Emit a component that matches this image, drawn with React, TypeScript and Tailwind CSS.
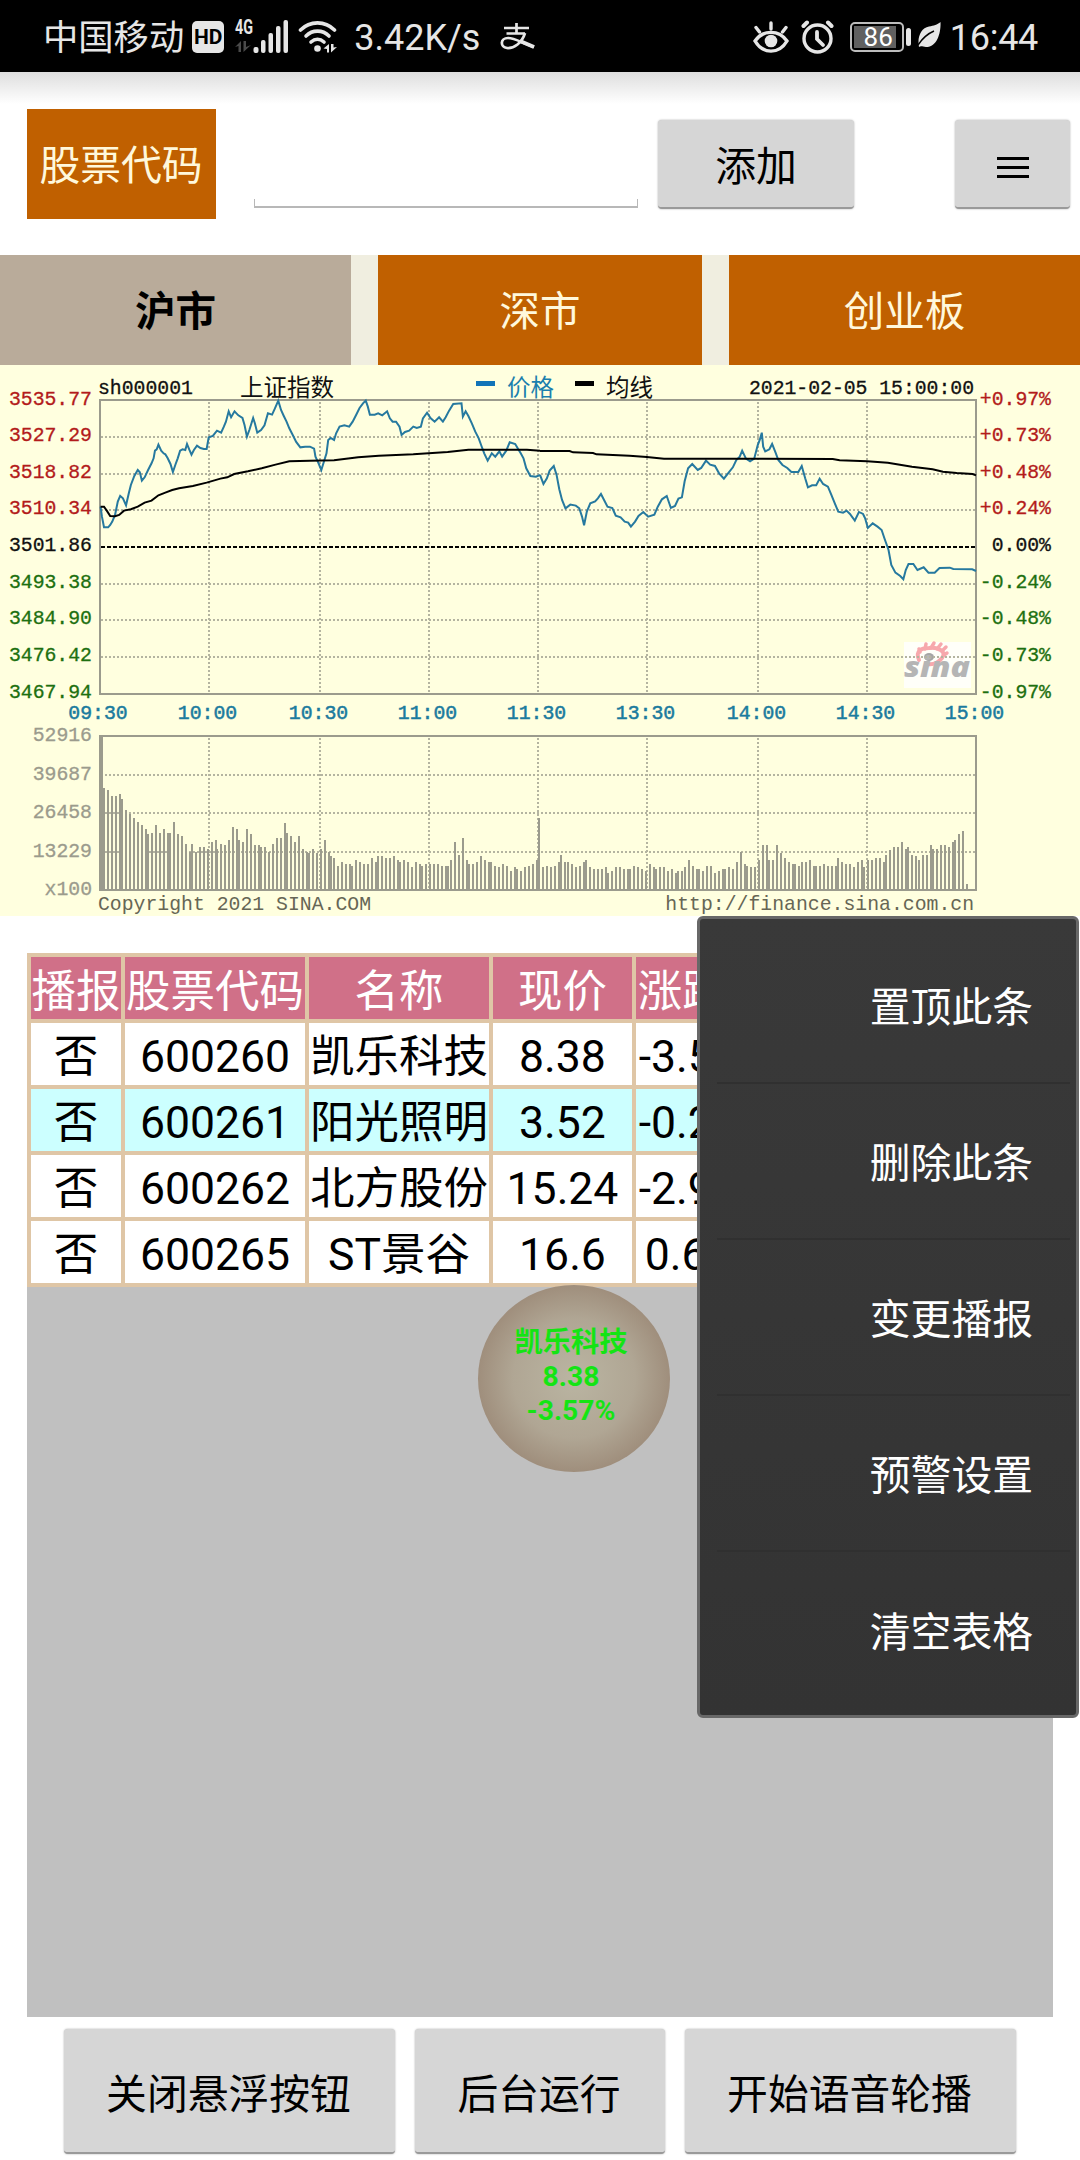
import { useState } from "react"

const TABS = ["沪市", "深市", "创业板"]

const STOCKS = [
  { code: "600260", name: "凯乐科技", price: "8.38", change: "-3.57%" },
  { code: "600261", name: "阳光照明", price: "3.52", change: "-0.28%" },
  { code: "600262", name: "北方股份", price: "15.24", change: "-2.93%" },
  { code: "600265", name: "ST景谷", price: "16.6", change: "0.61%" },
]

const MENU_ITEMS = ["置顶此条", "删除此条", "变更播报", "预警设置", "清空表格"]

const PRICE_LABELS = [
  { price: "3535.77", pct: "+0.97%", color: "#b31b1b" },
  { price: "3527.29", pct: "+0.73%", color: "#b31b1b" },
  { price: "3518.82", pct: "+0.48%", color: "#b31b1b" },
  { price: "3510.34", pct: "+0.24%", color: "#b31b1b" },
  { price: "3501.86", pct: "0.00%", color: "#111111" },
  { price: "3493.38", pct: "-0.24%", color: "#1d7010" },
  { price: "3484.90", pct: "-0.48%", color: "#1d7010" },
  { price: "3476.42", pct: "-0.73%", color: "#1d7010" },
  { price: "3467.94", pct: "-0.97%", color: "#1d7010" },
]

const TIMES = ["09:30", "10:00", "10:30", "11:00", "11:30", "13:30", "14:00", "14:30", "15:00"]
const TIME_X = [98, 207.5, 318.5, 427.5, 536.5, 645.5, 756.5, 865.5, 974.5]
const GRID_X = [209, 320, 429, 538, 647, 758, 867]
const VOLUME_LABELS = ["52916", "39687", "26458", "13229", "x100"]

// intraday price, each session drawn in its own coordinate space
const MORNING_PRICE =
  "292,800 296,830 302,862 314,862 320,855 326,845 334,825 342,785 349,768 357,775 366,796 374,760 380,735 390,708 400,690 406,697 412,722 420,712 430,690 440,670 446,655 450,632 455,628 460,614 468,632 475,640 480,643 487,655 495,672 502,696 510,672 516,655 523,632 530,628 538,630 543,612 550,630 556,644 563,630 572,617 582,624 592,627 600,627 606,592 618,588 630,572 642,578 650,560 656,545 664,514 671,532 681,514 692,526 704,534 710,555 717,590 724,570 735,534 740,550 747,578 758,570 768,556 778,520 790,524 798,506 808,482 816,510 824,528 832,545 840,565 850,585 860,606 872,622 886,620 900,620 912,626 916,650 924,668 933,690 942,660 948,640 953,600 960,594 970,600 976,580 986,560 1000,556 1014,560 1024,545 1034,525 1044,504 1054,490 1062,482 1068,500 1074,524 1088,524 1098,520 1110,526 1124,514 1132,535 1140,545 1150,545 1160,560 1166,585 1176,576 1188,572 1200,560 1210,564 1222,560 1228,535 1240,518 1250,534 1262,545 1275,532 1286,545 1294,532 1304,512 1316,492 1340,490 1344,530 1352,514 1360,528 1370,550 1380,575 1390,595 1398,618 1406,640 1416,662 1428,640 1438,650 1450,634 1458,650 1470,632 1480,607 1496,612 1504,626 1512,640 1520,655 1528,685 1540,708 1556,710 1568,705"
const AFTERNOON_PRICE =
  "0,705 10,732 20,715 28,692 40,678 48,704 56,748 64,780 74,805 88,794 104,797 114,805 122,830 128,856 136,815 146,790 160,784 168,775 177,762 186,780 196,800 210,804 220,827 234,832 246,845 256,848 264,860 276,845 286,828 300,816 314,830 332,824 342,800 354,778 368,768 380,804 392,798 402,776 412,772 420,724 430,685 442,672 458,690 468,684 482,662 494,674 508,678 520,700 534,716 546,700 560,682 570,660 580,650 587,632 598,656 610,664 622,656 632,616 638,600 644,578 648,620 654,634 666,628 674,612 684,638 692,660 704,675 718,684 730,696 750,696 760,678 770,715 778,742 790,736 802,736 812,716 822,732 836,740 846,765 856,790 866,815 880,818 890,812 900,822 914,842 926,816 938,822 944,835 952,864 966,850 980,860 992,870 1000,895 1012,930 1020,975 1032,998 1046,1008 1055,1018 1062,990 1070,972 1084,972 1096,990 1114,982 1128,998 1146,998 1160,984 1190,983 1200,987 1255,988 1266,993"
const MORNING_AVG =
  "292,800 302,800 310,812 320,828 334,829 346,825 360,812 380,808 400,800 420,788 440,782 460,766 480,758 500,750 520,745 560,738 600,728 640,716 660,712 680,702 720,694 760,685 800,674 840,664 900,662 970,661 1040,652 1100,647 1200,643 1300,636 1360,629 1530,629 1568,632"
const AFTERNOON_AVG =
  "0,633 86,633 96,637 154,639 164,643 260,647 310,651 360,656 850,657 870,661 950,664 1010,668 1080,680 1140,688 1170,695 1210,699 1256,702 1266,706"

const MORNING_VOLUME = [
  527, 685, 690, 708, 708, 702, 716, 750, 762, 774, 786, 795, 808, 822, 820, 795, 820, 808, 820, 820,
  786, 822, 828, 852, 875, 852, 876, 862, 862, 868, 847, 840, 868, 852, 855, 840, 801, 808, 840, 846,
  808, 822, 855, 856, 862, 862, 876, 852, 835, 835, 789, 820, 829, 846, 828, 868, 875, 880, 868, 880,
  868, 840, 876, 888, 895, 918, 906, 912, 912, 918, 900, 906, 912, 912, 894, 906, 888, 888, 895, 895,
  888, 900, 906, 900, 906, 922, 906, 912, 918, 912, 912, 912, 912, 918, 918, 918, 900, 847, 885, 835,
  900, 912, 912, 906, 888, 900, 906, 906, 918, 922, 912, 918, 934, 922, 928, 934, 922, 918, 912, 900,
]
const AFTERNOON_VOLUME = [
  775, 922, 918, 922, 918, 906, 886, 906, 906, 912, 922, 918, 906, 900, 922, 928, 928, 928, 922, 940,
  934, 922, 922, 928, 928, 928, 918, 922, 928, 934, 912, 922, 928, 922, 922, 934, 928, 940, 934, 934,
  922, 900, 918, 928, 928, 934, 918, 918, 940, 934, 928, 928, 922, 928, 906, 875, 912, 918, 922, 922,
  900, 855, 855, 900, 900, 855, 880, 894, 906, 912, 912, 918, 906, 906, 900, 918, 918, 918, 912, 918,
  918, 918, 894, 906, 912, 912, 922, 906, 900, 922, 900, 900, 894, 894, 906, 885, 870, 862, 862, 847,
  868, 862, 885, 888, 900, 885, 885, 855, 868, 868, 855, 855, 862, 847, 840, 822, 814, 972,
]

// bars sit on a two pixel raster, so some neighbours touch
const barX = (minute: number) => Math.round(99.5 + Math.round(minute * 1.842 + 0.4) * 1.983)

function StatusBar() {
  return (
    <div className="flex h-[72px] items-center bg-black pl-[43px] pr-[42px] pt-[2px] text-[#e6e6e6]">
      <span className="pt-[3px] text-[35.3px] leading-none">中国移动</span>
      <span className="ml-[8px] flex h-[32px] w-[32px] items-center justify-center rounded-[5px] bg-[#e6e6e6] text-[21px] font-bold leading-none text-black">
        HD
      </span>
      <svg className="ml-[11px] overflow-visible" width="54" height="36" viewBox="0 0 54 36" fill="#e6e6e6">
        <text x="0" y="15" fontSize="20" fontWeight="700" textLength="18" lengthAdjust="spacingAndGlyphs" fontFamily="Roboto">4G</text>
        <path d="M0 28 L6 22 V33 H3.500 V27 Z M8.500 22 H11 V28 L16 26 L8.500 33 Z" fill="#4a4a4a" />
        <rect x="18.500" y="28" width="5" height="6" rx="2" />
        <rect x="26" y="21" width="4.500" height="13" rx="2" />
        <rect x="33.500" y="14" width="4.500" height="20" rx="2" />
        <rect x="41" y="7" width="4.500" height="27" rx="2" />
        <rect x="48.500" y="1" width="4.500" height="33" rx="2" />
      </svg>
      <svg className="ml-[9px]" width="40" height="34" viewBox="0 0 40 34" fill="none" stroke="#e6e6e6" strokeWidth="3.600" strokeLinecap="round">
        <path d="M2.500 10 C12 0.500 27 0.500 36.500 10" />
        <path d="M8 16 C14.500 9.500 24.500 9.500 31 16" />
        <path d="M13 22 C17 18.500 22 18.500 26 22" />
        <circle cx="19.500" cy="28.500" r="3.300" fill="#e6e6e6" stroke="none" />
        <path d="M25.500 28.500 L31 24 V32.500 H29 V29 Z M33 24 H35.500 V27.500 L39 27 L33 32.500 Z" fill="#e6e6e6" stroke="none" />
      </svg>
      <span className="ml-[16px] pt-[2px] text-[36px] leading-none">3.42K/s</span>
      <svg className="ml-[20px]" width="35" height="28" viewBox="0 0 35 28" fill="none" stroke="#e6e6e6" strokeWidth="2.700">
        <path d="M4 5 H29 M16.500 0 V10.500 M6.500 10.500 H25" />
        <path d="M25 10 C22 20 14 25.500 7 25 C0 24 0 15 8 15 C15 15 22 20 34 24" />
        <path d="M20 18 L34 24" strokeWidth="4" />
      </svg>

      <svg className="ml-auto" width="36" height="33" viewBox="0 0 36 33" fill="none" stroke="#e6e6e6" strokeWidth="3.400" strokeLinecap="round">
        <path d="M18 2 V8 M3 6.500 L6.500 11 M33 6.500 L29.500 11" />
        <path d="M2 20 C10 8.500 26 8.500 34 20 C26 33.500 10 33.500 2 20 Z" />
        <circle cx="18" cy="20" r="6.300" fill="#e6e6e6" stroke="none" />
      </svg>
      <svg className="ml-[12px]" width="34" height="34" viewBox="0 0 34 34" fill="none" stroke="#e6e6e6" strokeWidth="3.400" strokeLinecap="round">
        <circle cx="16.500" cy="18.500" r="13.500" />
        <path d="M2.500 6 L6 2.500 M30.500 6 L27 2.500" strokeWidth="4" />
        <path d="M16 12 V19 L22 25" strokeWidth="3.800" />
      </svg>
      <span className="ml-[15px] flex h-[30px] w-[54px] items-center rounded-[5px] border-2 border-[#bdbdbd] p-[2px]">
        <span className="flex h-full w-[42px] items-center justify-end bg-[#606060] pr-[3px] text-[26px] leading-none text-white">86</span>
      </span>
      <span className="ml-[2px] h-[18px] w-[5px] rounded-full bg-[#e6e6e6]" />
      <svg className="ml-[7px] -mt-[4px]" width="23" height="26" viewBox="0 0 23 26">
        <path d="M22.500 0 C23 9 20 25 8 25 C5 25 3 23.500 1 25 C-1 15 3 6 11 4.500 C16 3.500 19 3 22.500 0 Z" fill="#e6e6e6" />
        <path d="M0 23 C4 17 9 12 16 9" stroke="#000" strokeWidth="1.500" fill="none" />
      </svg>
      <span className="ml-[9px] pt-[2px] text-[36px] leading-none tracking-[-0.3px]">16:44</span>
    </div>
  )
}

function GreyButton({ label, className }: { label: string; className: string }) {
  return (
    <button
      className={`flex items-center justify-center rounded-[4px] border-b-2 border-[#9a9a9a] bg-[#d6d6d6] text-[40.8px] leading-none text-black shadow-[0_0_2px_rgba(0,0,0,0.35)] ${className}`}
    >
      {label}
    </button>
  )
}

function IndexChart() {
  return (
    <svg className="block bg-[#ffffdf]" width="1080" height="551" viewBox="0 365 1080 551">
      {/* Header line */}
      <g fontFamily="'Liberation Mono', monospace" fontSize="19.800" fill="#111" stroke="#111" strokeWidth="0.300">
        <text x="98" y="393.500">sh000001</text>
        <text x="749" y="393.500" textLength="225">2021-02-05 15:00:00</text>
      </g>
      <g fontFamily="'Noto Sans CJK SC', sans-serif" fontSize="23.500">
        <text x="240" y="396" fill="#111">上证指数</text>
        <text x="507" y="396" fill="#1b7fae">价格</text>
        <text x="606" y="396" fill="#111">均线</text>
      </g>
      <rect x="476" y="381" width="19" height="5" fill="#1274b8" />
      <rect x="575" y="381" width="19" height="5" fill="#000" />

      {/* Sina watermark */}
      <rect x="904" y="642" width="67" height="46" fill="#fff" opacity="0.800" />
      <g fill="none" stroke="#f7a8ac" strokeLinecap="round">
        <path d="M919 660 C915 651 921 648 929 648 C939 647 947 652 942 658 C938 663 932 665 927 664" strokeWidth="4" />
        <path d="M920 652 L919 649 M925 649 L926 644 M931 648 L934 643 M937 649 L941 644 M942 651 L946 647 M944 655 L947 653" strokeWidth="3.500" />
      </g>
      <ellipse cx="929" cy="657" rx="5" ry="4" fill="#a5a5a5" />
      <text x="904" y="677" fontFamily="'Open Sans', sans-serif" fontSize="29" fontWeight="800" fontStyle="italic" fill="#b5b5b5" textLength="66" lengthAdjust="spacingAndGlyphs">
        sina
      </text>

      {/* Grid */}
      <g stroke="#b4b4a0" strokeWidth="2" strokeDasharray="2 2">
        {[437, 474, 510, 584, 620, 657, 775, 813, 852].map((y) => (
          <line key={y} x1="101" x2="975" y1={y} y2={y} />
        ))}
        {GRID_X.map((x) => (
          <path key={x} d={`M${x} 402 V693 M${x} 738 V889`} />
        ))}
      </g>
      <line x1="101" x2="975" y1="547" y2="547" stroke="#000" strokeWidth="2" strokeDasharray="4 2" />

      {/* Volume */}
      <g fill="#9b9b8d" shapeRendering="crispEdges">
        <rect x="99" y="736" width="4" height="154" />
        {MORNING_VOLUME.map((top, i) => (
          <rect key={i} x={barX(i)} y={560 + top / 3} width="2" height={(990 - top) / 3} />
        ))}
        {AFTERNOON_VOLUME.map((top, i) => (
          <rect key={i} x={barX(i + 120)} y={560 + top / 3} width="2" height={(990 - top) / 3} />
        ))}
      </g>
      <g fill="none" stroke="#9b9b8d" strokeWidth="2">
        <rect x="100" y="400" width="876" height="294" />
        <rect x="100" y="736" width="876" height="154" />
      </g>

      {/* Price and average */}
      <g fill="none" strokeWidth="2">
        <g transform="translate(0 240) scale(0.3444 0.3333)">
          <polyline points={MORNING_PRICE} stroke="#26799f" vectorEffect="non-scaling-stroke" />
          <polyline points={MORNING_AVG} stroke="#000" vectorEffect="non-scaling-stroke" />
        </g>
        <g transform="translate(540 240) scale(0.3444 0.3333)">
          <polyline points={AFTERNOON_PRICE} stroke="#26799f" vectorEffect="non-scaling-stroke" />
          <polyline points={AFTERNOON_AVG} stroke="#000" vectorEffect="non-scaling-stroke" />
        </g>
      </g>

      {/* Axis labels */}
      <g fontFamily="'Liberation Mono', monospace" fontSize="19.800">
        {PRICE_LABELS.map((row, i) => (
          <g key={row.price} fill={row.color} stroke={row.color} strokeWidth="0.300">
            <text x="92" y={404.5 + i * 36.65} textAnchor="end">{row.price}</text>
            <text x="1051" y={404.5 + i * 36.65} textAnchor="end">{row.pct}</text>
          </g>
        ))}
        {TIMES.map((time, i) => (
          <text key={time} x={TIME_X[i]} y="718.500" textAnchor="middle" fill="#1b7b9e" stroke="#1b7b9e" strokeWidth="0.500">
            {time}
          </text>
        ))}
        {VOLUME_LABELS.map((label, i) => (
          <text key={label} x="92" y={741 + i * 38.5} textAnchor="end" fill="#9b9b8d" stroke="#9b9b8d" strokeWidth="0.300">
            {label}
          </text>
        ))}
        <text x="98" y="910" fill="#666655">Copyright 2021 SINA.COM</text>
        <text x="974" y="910" fill="#666655" textAnchor="end">http://finance.sina.com.cn</text>
      </g>
    </svg>
  )
}

function StockTable() {
  const [selected, setSelected] = useState("600261")

  return (
    <div className="grid w-[750px] grid-cols-[90px_180px_180px_139px_137px] auto-rows-[62px] gap-1 border-4 border-[#dfc6a6] bg-[#dfc6a6] text-[44.500px] leading-none">
      {["播报", "股票代码", "名称", "现价", "涨跌幅"].map((title) => (
        <div key={title} className="flex items-center justify-center whitespace-nowrap bg-[#d07088] pt-2 text-white">
          {title}
        </div>
      ))}
      {STOCKS.map((stock) =>
        ["否", stock.code, stock.name, stock.price, stock.change].map((value, i) => (
          <div
            key={stock.code + i}
            onClick={() => setSelected(stock.code)}
            className={`flex items-center justify-center whitespace-nowrap pt-1.5 text-black first-of-type:pl-1 ${
              selected === stock.code ? "bg-[#ccffff]" : "bg-white"
            }`}
          >
            {value}
          </div>
        ))
      )}
    </div>
  )
}

export default function App() {
  const [tab, setTab] = useState(0)
  const [menuOpen, setMenuOpen] = useState(true)

  return (
    <div className="relative flex h-[2160px] w-[1080px] flex-col overflow-hidden bg-white font-['Roboto','Noto_Sans_CJK_SC',sans-serif]">
      <StatusBar />

      {/* Search row */}
      <div className="flex h-[183px] items-start bg-linear-to-b from-[#dedede] to-white to-[32px] pl-[27px] pt-[37px]">
        <div className="flex h-[110px] w-[189px] items-center justify-center bg-[#c06000] pr-px pt-[5px] text-[40.8px] leading-none text-[#fff8dc]">
          股票代码
        </div>
        <div className="ml-[38px] flex h-[99px] w-[384px] flex-col justify-end">
          <div className="h-[9px] border-x border-b-2 border-[#b8b8b8]" />
        </div>
        <GreyButton label="添加" className="ml-[20px] mt-[11px] h-[89px] w-[196px] pt-[7px]" />
        <button
          onClick={() => setMenuOpen(!menuOpen)}
          className="ml-[101px] mt-[11px] flex h-[89px] w-[115px] flex-col items-center justify-center gap-[6px] rounded-[4px] border-b-2 border-[#9a9a9a] bg-[#d6d6d6] pt-[8px] shadow-[0_0_2px_rgba(0,0,0,0.35)]"
        >
          <span className="h-[3px] w-[32px] bg-black" />
          <span className="h-[3px] w-[32px] bg-black" />
          <span className="h-[3px] w-[32px] bg-black" />
        </button>
      </div>

      {/* Market tabs */}
      <div className="grid h-[110px] grid-cols-[351px_324px_351px] gap-[27px] bg-[#f0eee0]">
        {TABS.map((name, i) => (
          <button
            key={name}
            onClick={() => setTab(i)}
            className={`flex items-center justify-center pt-[5px] text-[40.5px] leading-none ${
              tab === i ? "bg-[#b9ab9a] font-bold text-black" : "bg-[#c06000] text-[#fff8dc]"
            }`}
          >
            {name}
          </button>
        ))}
      </div>

      <IndexChart />

      <div className="mx-[27px] mt-[37px] h-[1064px] bg-[#c0c0c0]">
        <StockTable />
      </div>

      {/* Bottom actions */}
      <div className="mt-[12px] flex gap-[20px] pl-[64px]">
        <GreyButton label="关闭悬浮按钮" className="h-[125px] w-[331px] pr-[2px] pt-[9px]" />
        <GreyButton label="后台运行" className="h-[125px] w-[250px] pr-[2px] pt-[9px]" />
        <GreyButton label="开始语音轮播" className="h-[125px] w-[331px] pr-[2px] pt-[9px]" />
      </div>

      {/* Floating quote */}
      <div className="absolute left-[478px] top-[1285px] flex h-[187px] w-[192px] flex-col items-center justify-center rounded-[50%] bg-radial from-[#bab5a2] via-[#b0a694] via-45% to-[#8c7462] pb-[3px] pr-[6px] text-[28.3px] font-bold leading-[34px] text-[#14e414]">
        <span>凯乐科技</span>
        <span>8.38</span>
        <span>-3.57%</span>
      </div>

      {/* Popup menu */}
      {menuOpen && (
        <div className="absolute left-[697px] top-[916px] flex h-[802px] w-[382px] flex-col rounded-[6px] border-[3px] border-[#686868] bg-linear-to-b from-[#393939] to-[#333333] pl-[17px] pr-[6px] pt-[9px] text-white">
          {MENU_ITEMS.map((item) => (
            <button
              key={item}
              onClick={() => setMenuOpen(false)}
              className="flex h-[156px] items-center justify-end border-b-2 border-[#303030] pr-[37px] pt-[6px] text-[40.8px] leading-none last:border-0"
            >
              {item}
            </button>
          ))}
        </div>
      )}
    </div>
  )
}
